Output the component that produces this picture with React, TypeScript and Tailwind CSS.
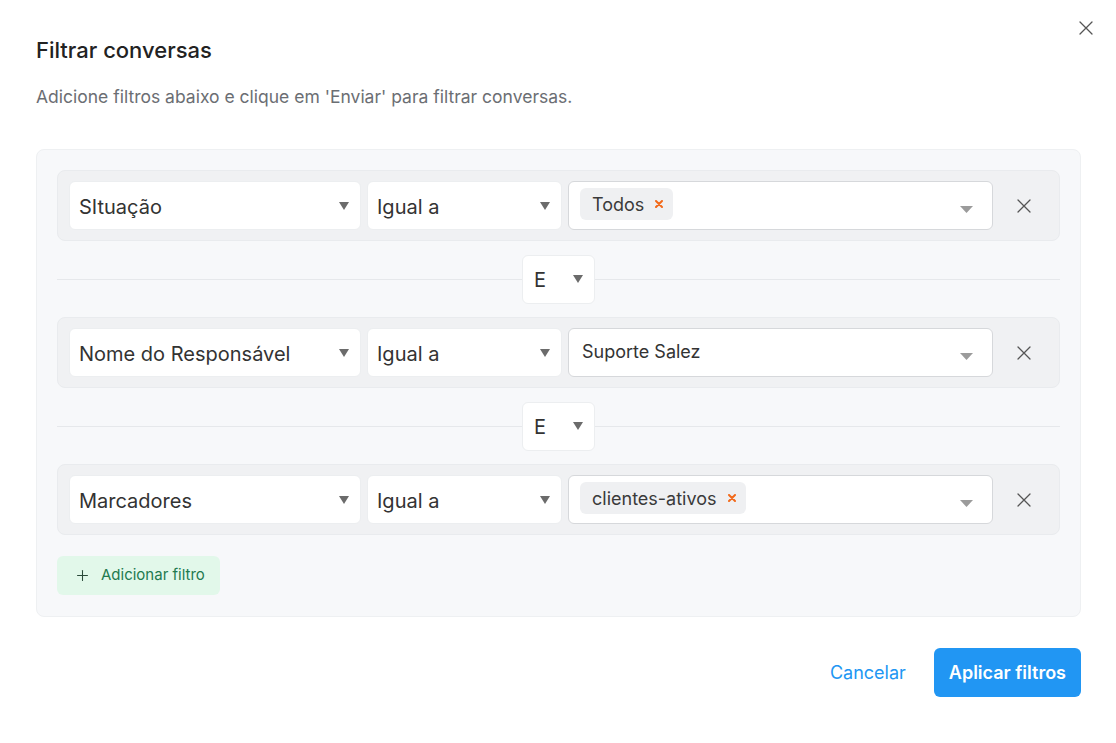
import { Plus } from "lucide-react";

type FilterRow = {
  field: string;
  op: string;
  value: string;
  tag?: boolean;
};

const ROWS: FilterRow[] = [
  { field: "SItuação", op: "Igual a", value: "Todos", tag: true },
  { field: "Nome do Responsável", op: "Igual a", value: "Suporte Salez" },
  { field: "Marcadores", op: "Igual a", value: "clientes-ativos", tag: true },
];

function Caret({ className = "" }: { className?: string }) {
  return (
    <svg width="10" height="8" viewBox="0 0 10 8" className={className}>
      <path d="M0 0h10L5 8z" fill="currentColor" />
    </svg>
  );
}

function Cross({ size = 14, className = "" }: { size?: number; className?: string }) {
  return (
    <svg width={size} height={size} viewBox="0 0 14 14" className={className}>
      <path d="M1 1l12 12M13 1L1 13" stroke="currentColor" strokeWidth="1.3" strokeLinecap="round" />
    </svg>
  );
}

function SelectBox({ label, className = "" }: { label: string; className?: string }) {
  return (
    <div
      className={`flex h-[49px] shrink-0 items-center justify-between rounded-md border border-[#eceef0] bg-white pl-[9px] pr-[11px] text-[20px] text-[#333] ${className}`}
    >
      <span className="pt-[2px]">{label}</span>
      <Caret className="text-[#6b6b6b]" />
    </div>
  );
}

function ValueBox({ row }: { row: FilterRow }) {
  return (
    <div className="flex h-[49px] min-w-0 flex-1 items-center justify-between rounded-md border border-[#d6d8db] bg-white pl-[11px] pr-[19px]">
      {row.tag ? (
        <span className="mb-[3px] flex h-[32px] items-center gap-[11px] rounded-md bg-[#eff0f2] pl-[12px] pr-[10px] text-[18px] text-[#3a3a3a]">
          {row.value}
          <svg width="8" height="8" viewBox="0 0 8 8">
            <path d="M1 1l6 6M7 1L1 7" stroke="#f26a1b" strokeWidth="2" strokeLinecap="round" />
          </svg>
        </span>
      ) : (
        <span className="mb-[3px] pl-[2px] text-[18px] text-[#333]">{row.value}</span>
      )}
      <svg width="13" height="7" viewBox="0 0 13 7" className="mt-[8px]">
        <path d="M0 0h13L6.5 7z" fill="#9b9b9b" />
      </svg>
    </div>
  );
}

function Row({ row }: { row: FilterRow }) {
  return (
    <div className="flex items-center gap-[6px] rounded-lg border border-[#e9ebee] bg-[#f0f1f3] py-[10px] pl-[11px] pr-[10px]">
      <SelectBox label={row.field} className="w-[292px]" />
      <SelectBox label={row.op} className="w-[195px]" />
      <ValueBox row={row} />
      <div className="flex w-[50px] shrink-0 justify-center">
        <Cross className="text-[#555]" />
      </div>
    </div>
  );
}

function Connector() {
  return (
    <div className="relative flex h-[76px] items-center justify-center">
      <div className="absolute inset-x-0 top-1/2 h-px bg-[#e6e8eb]" />
      <div className="relative flex h-[49px] w-[73px] items-center justify-between rounded-md border border-[#eceef0] bg-white pl-[11px] pr-[11px] text-[20px] text-[#333]">
        <span className="pt-[2px]">E</span>
        <Caret className="text-[#6b6b6b]" />
      </div>
    </div>
  );
}

export default function App() {
  return (
    <div
      className="relative min-h-[743px] w-full bg-white pl-[36px] pr-[35px] pt-[36px]"
      style={{ fontFamily: "Inter, 'Noto Sans', sans-serif" }}
    >
      <button className="absolute right-[23px] top-[21px] text-[#555]">
        <Cross />
      </button>

      <h1 className="text-[22px] font-medium leading-[28px] text-[#222]">Filtrar conversas</h1>
      <p className="mt-[21px] text-[17.5px] leading-[24px] text-[#6b6e73]">
        Adicione filtros abaixo e clique em 'Enviar' para filtrar conversas.
      </p>

      <div className="mt-[40px] rounded-lg border border-[#eef0f2] bg-[#f7f8fa] px-[20px] pb-[21px] pt-[20px]">
        {ROWS.map((row, i) => (
          <div key={row.field}>
            {i > 0 && <Connector />}
            <Row row={row} />
          </div>
        ))}

        <button className="mt-[21px] flex h-[39px] items-center gap-[10px] rounded-md bg-[#e2f8ea] pl-[17px] pr-[15px] text-[15px] text-[#237a4f]">
          <Plus size={17} strokeWidth={1.5} className="text-[#2b4a3a]" />
          Adicionar filtro
        </button>
      </div>

      <div className="mt-[31px] flex items-center justify-end gap-[28px]">
        <button className="text-[18px] text-[#2196f3]">Cancelar</button>
        <button className="h-[49px] rounded-md bg-[#2196f3] px-[15px] text-[18px] font-semibold text-white">
          Aplicar filtros
        </button>
      </div>
    </div>
  );
}
